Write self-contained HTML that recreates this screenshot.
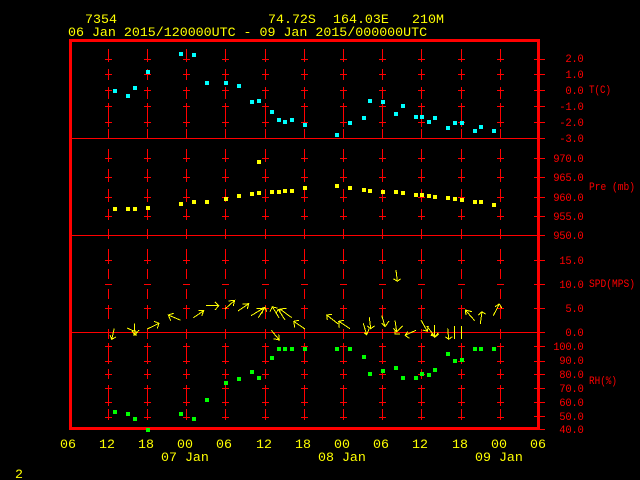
<!DOCTYPE html>
<html>
<head>
<meta charset="utf-8">
<style>
html,body{margin:0;padding:0;background:#000;}
body{width:640px;height:480px;overflow:hidden;}
svg{display:block;}
text{font-family:"Liberation Mono",monospace;}
.y{fill:#ff0;font-size:13.3px;}
.r{fill:#f00;font-size:10.6px;text-anchor:end;letter-spacing:-.3px;}
.l{fill:#f00;font-size:10.6px;}
.c{text-anchor:middle;}
</style>
</head>
<body>
<svg width="640" height="480" viewBox="0 0 640 480" xmlns="http://www.w3.org/2000/svg">
<rect width="640" height="480" fill="#000"/>
<defs>
<g id="col">
<path shape-rendering="crispEdges" fill="none" stroke="#f00" stroke-width="1" d="M.5 49V62M.5 69V80M.5 87V99M.5 103V127M.5 129V138M.5 149V162M.5 169V182M.5 189V202M.5 209V220M.5 229V239M.5 249V264M.5 269V279M.5 289V299M.5 305V319M.5 329V339M.5 343V364M.5 369V379M.5 385V406M.5 409V420
M-3 59.5H4M-3 74.5H4M-3 90.5H4M-3 106.5H4M-3 122.5H4M-3 158.5H4M-3 177.5H4M-3 197.5H4M-3 216.5H4M-3 260.5H4M-3 284.5H4M-3 308.5H4M-3 346.5H4M-3 361.5H4M-3 374.5H4M-3 388.5H4M-3 402.5H4M-3 417.5H4"/>
</g>
</defs>
<use href="#col" x="108"/><use href="#col" x="147"/><use href="#col" x="186"/><use href="#col" x="225"/><use href="#col" x="265"/><use href="#col" x="304"/><use href="#col" x="343"/><use href="#col" x="382"/><use href="#col" x="421"/><use href="#col" x="461"/><use href="#col" x="500"/>

<!-- panel lines and right ticks -->
<path shape-rendering="crispEdges" fill="none" stroke="#f00" stroke-width="1" d="M72 138.5H545M72 235.5H545M72 332.5H545
M534 59.5H545M534 74.5H545M534 90.5H545M534 106.5H545M534 122.5H545
M534 158.5H545M534 177.5H545M534 197.5H545M534 216.5H545
M534 260.5H545M534 284.5H545M534 308.5H545
M534 346.5H545M534 361.5H545M534 374.5H545M534 388.5H545M534 402.5H545M534 416.5H545M534 429.5H545"/>

<!-- frame -->
<path shape-rendering="crispEdges" fill="#f00" d="M69 39H540V430H69ZM72 42V427H537V42Z" fill-rule="evenodd"/>

<!-- cyan T -->
<path shape-rendering="crispEdges" fill="#0ff" d="M113 89h4v4h-4zM126 94h4v4h-4zM133 86h4v4h-4zM146 70h4v4h-4zM179 52h4v4h-4zM192 53h4v4h-4zM205 81h4v4h-4zM224 81h4v4h-4zM237 84h4v4h-4zM250 100h4v4h-4zM257 99h4v4h-4zM270 110h4v4h-4zM277 118h4v4h-4zM283 120h4v4h-4zM290 118h4v4h-4zM303 123h4v4h-4zM335 133h4v4h-4zM348 121h4v4h-4zM362 116h4v4h-4zM368 99h4v4h-4zM381 100h4v4h-4zM394 112h4v4h-4zM401 104h4v4h-4zM414 115h4v4h-4zM420 115h4v4h-4zM427 120h4v4h-4zM433 116h4v4h-4zM446 126h4v4h-4zM453 121h4v4h-4zM460 121h4v4h-4zM473 129h4v4h-4zM479 125h4v4h-4zM492 129h4v4h-4z"/>

<!-- yellow Pre -->
<path shape-rendering="crispEdges" fill="#ff0" d="M113 207h4v4h-4zM126 207h4v4h-4zM133 207h4v4h-4zM146 206h4v4h-4zM179 202h4v4h-4zM192 200h4v4h-4zM205 200h4v4h-4zM224 197h4v4h-4zM237 194h4v4h-4zM250 192h4v4h-4zM257 191h4v4h-4zM270 190h4v4h-4zM277 190h4v4h-4zM283 189h4v4h-4zM290 189h4v4h-4zM303 186h4v4h-4zM257 160h4v4h-4zM335 184h4v4h-4zM348 186h4v4h-4zM362 188h4v4h-4zM368 189h4v4h-4zM381 190h4v4h-4zM394 190h4v4h-4zM401 191h4v4h-4zM414 193h4v4h-4zM420 193h4v4h-4zM427 194h4v4h-4zM433 195h4v4h-4zM446 196h4v4h-4zM453 197h4v4h-4zM460 198h4v4h-4zM473 200h4v4h-4zM479 200h4v4h-4zM492 203h4v4h-4z"/>

<!-- green RH -->
<path shape-rendering="crispEdges" fill="#0f0" d="M113 410h4v4h-4zM126 412h4v4h-4zM133 417h4v4h-4zM146 428h4v4h-4zM179 412h4v4h-4zM192 417h4v4h-4zM205 398h4v4h-4zM224 381h4v4h-4zM237 377h4v4h-4zM250 370h4v4h-4zM257 376h4v4h-4zM270 356h4v4h-4zM277 347h4v4h-4zM283 347h4v4h-4zM290 347h4v4h-4zM303 347h4v4h-4zM335 347h4v4h-4zM348 347h4v4h-4zM362 355h4v4h-4zM368 372h4v4h-4zM381 369h4v4h-4zM394 366h4v4h-4zM401 376h4v4h-4zM414 376h4v4h-4zM420 372h4v4h-4zM427 373h4v4h-4zM433 368h4v4h-4zM446 352h4v4h-4zM453 359h4v4h-4zM460 358h4v4h-4zM473 347h4v4h-4zM479 347h4v4h-4zM492 347h4v4h-4z"/>

<!-- wind arrows -->
<path fill="none" stroke="#ff0" stroke-width="1" shape-rendering="crispEdges" d="
M114.3 328.3L111.7 339.3M110 335L111.7 339.3L116 337
M127 328L137.7 332.7M134.3 323.3L135 334M132 331L135 335L139 330M133 335L137 335
M147.3 329L159 323.3M154 321.3L159 323.3L157.3 328.3
M180.7 320.3L168.3 315M173.7 313.3L168.3 315L170.7 320.7
M193.3 317.7L203.7 310.7M198.3 310.7L203.7 310.7L201.7 316
M206 305.7L218.7 305.7M215 302L218.7 305.7L215 310
M225 309L234.7 300.3M228.3 301L234.7 300.3L233.3 306
M238 311L248.7 303.7M242.7 304L248.7 303.7L247.3 309
M251 315.7L263.3 308.3M256.7 308.3L263.3 308.3L262 313.3
M258.3 317.7L265 307.3M261.7 308.3L265 307.3L266.7 311.7
M279 317.7L272.3 306.7M270 311.7L272.3 306.7L277.7 308.3
M285 320L278.3 309.3M276 313.3L278.3 309.3L282.7 309.3
M291.7 317.7L280 309M280 313L280 309L286.7 308.3
M305 329L293.7 321.3M294.7 327.3L293.7 321.3L299 320.3
M271.3 330.3L279.3 340M273.3 338.7L279.3 340L278.7 334.3
M338.3 324L326.7 315M327.3 320L326.7 315L332 314.3
M350 328.7L338.7 321.3M339.3 327.7L338.7 321.3L344 320.3
M396 270L397.3 281.3M393.3 278.7L397.3 281.3L400.7 278.7
M363.3 323.3L366.7 334.7M364 332.7L366.7 334.7L369.3 328.3
M369.3 317.3L370.7 328.7M367.3 326L370.7 328.7L374.7 325.7
M381.7 315.3L385 326.7M381.7 323.3L385 326.7L389 321
M395 320.3L396.7 331.7M393.3 328.3L396.7 331.7L402.7 326
M395 330L395 334L400 334
M416 330.3L405 335.3M407.7 331.7L405 335.3L409.3 338.3
M421 320L427.3 331.3M422.7 330L427.3 331.3L428.3 326
M426.7 326L435 336.7M430.7 335L435 336.7L438.3 332.7
M434.7 325L434.7 337.3M431.3 334L434.7 337.3L438.7 334
M447.7 328.3L448.7 339.3M445.3 336.7L448.7 339.3L452.3 336.7
M454.5 326V339M461.5 326V339
M474.7 320.7L465.3 310M466 315L465.3 310L472 311.7
M480.3 324L482 311.7M478.3 315L482 311.7L485.7 314.3
M493.3 315.7L499.3 304M495 306.7L499.3 304L502 308.3"/>

<!-- header -->
<text class="y" x="85" y="23">7354</text>
<text class="y" x="268" y="23">74.72S</text>
<text class="y" x="333" y="23">164.03E</text>
<text class="y" x="412" y="23">210M</text>
<text class="y" x="68" y="36">06 Jan 2015/120000UTC - 09 Jan 2015/000000UTC</text>

<!-- right labels -->
<text class="r" x="583.5" y="62">2.0</text>
<text class="r" x="583.5" y="78">1.0</text>
<text class="r" x="583.5" y="94">0.0</text>
<text class="r" x="583.5" y="110">-1.0</text>
<text class="r" x="583.5" y="126">-2.0</text>
<text class="r" x="583.5" y="142">-3.0</text>
<text class="r" x="583.5" y="162">970.0</text>
<text class="r" x="583.5" y="181">965.0</text>
<text class="r" x="583.5" y="201">960.0</text>
<text class="r" x="583.5" y="220">955.0</text>
<text class="r" x="583.5" y="239">950.0</text>
<text class="r" x="583.5" y="264">15.0</text>
<text class="r" x="583.5" y="288">10.0</text>
<text class="r" x="583.5" y="312">5.0</text>
<text class="r" x="583.5" y="336">0.0</text>
<text class="r" x="583.5" y="350">100.0</text>
<text class="r" x="583.5" y="364">90.0</text>
<text class="r" x="583.5" y="378">80.0</text>
<text class="r" x="583.5" y="392">70.0</text>
<text class="r" x="583.5" y="406">60.0</text>
<text class="r" x="583.5" y="420">50.0</text>
<text class="r" x="583.5" y="433">40.0</text>

<text class="l" x="589" y="93" textLength="22" lengthAdjust="spacingAndGlyphs">T(C)</text>
<text class="l" x="589" y="190" textLength="46" lengthAdjust="spacingAndGlyphs">Pre (mb)</text>
<text class="l" x="589" y="287" textLength="46" lengthAdjust="spacingAndGlyphs">SPD(MPS)</text>
<text class="l" x="589" y="384" textLength="28" lengthAdjust="spacingAndGlyphs">RH(%)</text>

<!-- x axis -->
<text class="y c" x="68" y="448">06</text>
<text class="y c" x="107" y="448">12</text>
<text class="y c" x="146" y="448">18</text>
<text class="y c" x="185" y="448">00</text>
<text class="y c" x="224" y="448">06</text>
<text class="y c" x="264" y="448">12</text>
<text class="y c" x="303" y="448">18</text>
<text class="y c" x="342" y="448">00</text>
<text class="y c" x="381" y="448">06</text>
<text class="y c" x="420" y="448">12</text>
<text class="y c" x="460" y="448">18</text>
<text class="y c" x="499" y="448">00</text>
<text class="y c" x="538" y="448">06</text>
<text class="y" x="161" y="461">07 Jan</text>
<text class="y" x="318" y="461">08 Jan</text>
<text class="y" x="475" y="461">09 Jan</text>
<text class="y" x="15" y="478">2</text>
</svg>
</body>
</html>
